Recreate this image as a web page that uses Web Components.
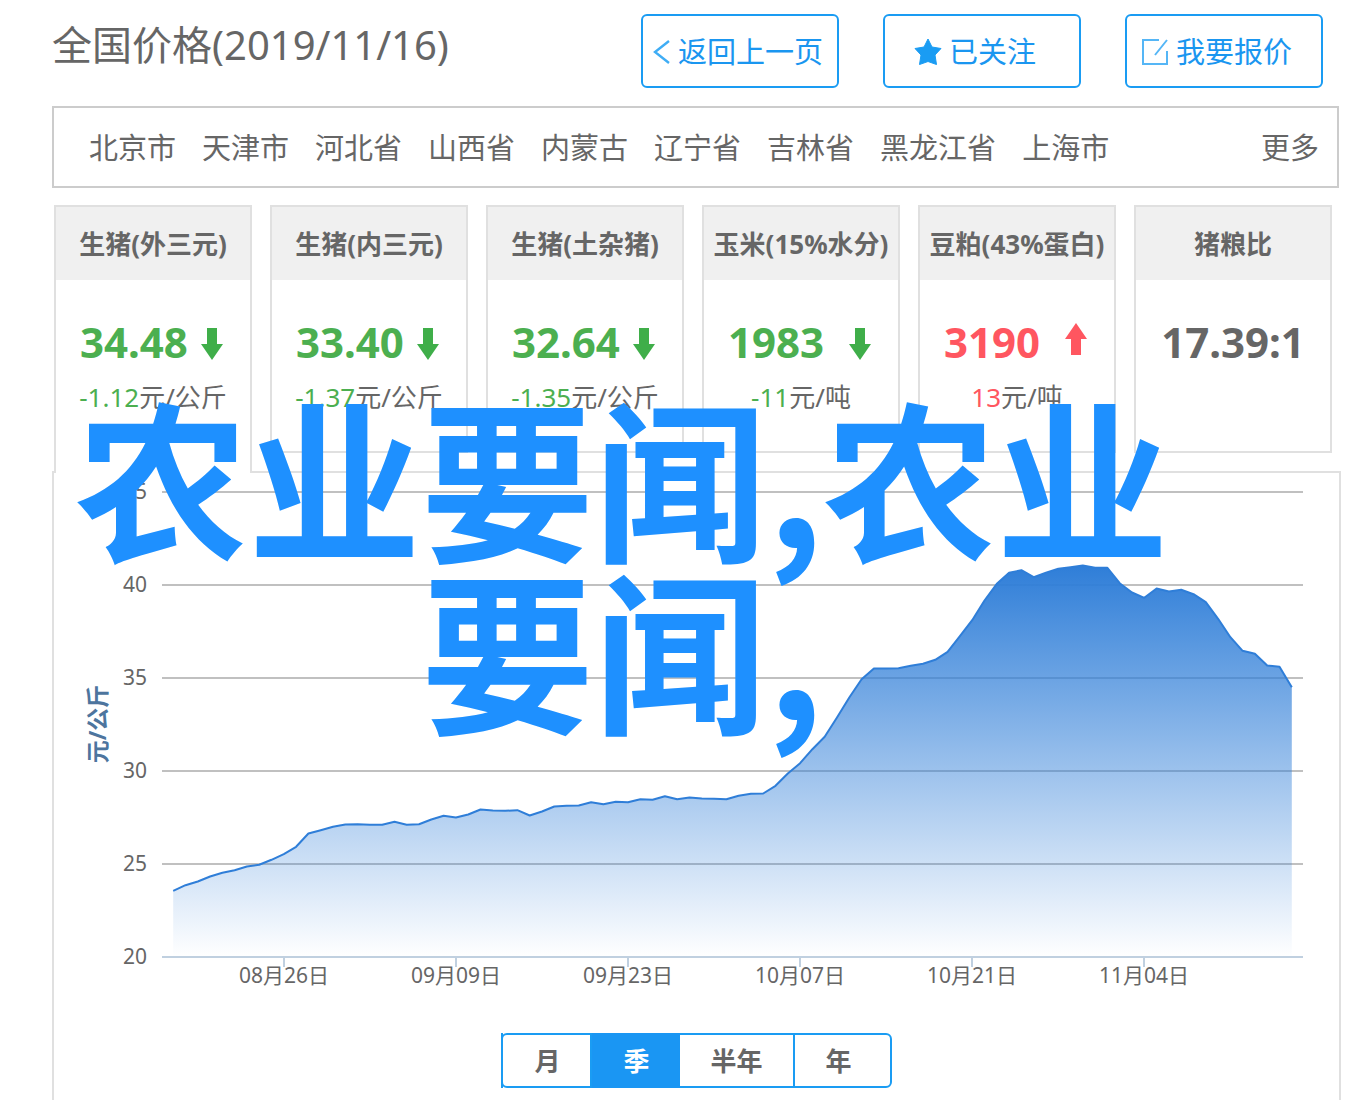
<!DOCTYPE html>
<html lang="zh-CN">
<head>
<meta charset="utf-8">
<title>全国价格</title>
<style>
body{margin:0;background:#fff;color:#666;font-family:"Noto Sans","Noto Sans CJK SC",sans-serif;}
</style>
</head>
<body>
<price-page></price-page>
<script>
const define = (name, html, init) => {
  const t = document.createElement('template');
  t.innerHTML = html;
  customElements.define(name, class extends HTMLElement {
    connectedCallback() {
      if (this.shadowRoot) return;
      this.attachShadow({mode: 'open'}).append(t.content.cloneNode(true));
      if (init) init.call(this, this.shadowRoot);
    }
  });
};

define('action-button', `
<style>
:host{display:block;width:198px}
button{box-sizing:border-box;width:100%;height:74px;display:flex;align-items:center;gap:7px;padding:2px 0 0 var(--inset,10px);
  border:2px solid #1a9cf3;border-radius:6px;background:#fff;color:#1a96f0;font:inherit;font-size:29px;line-height:40px;white-space:nowrap;cursor:pointer}
</style>
<button type="button"><slot name="icon"></slot><span><slot></slot></span></button>`);

define('region-nav', `
<style>
:host{display:block}
nav{box-sizing:border-box;height:82px;border:2px solid #ccc;display:flex;align-items:center;gap:26px;padding:2px 18px 0 35px;font-size:29px;line-height:40px;white-space:nowrap}
a{color:inherit;text-decoration:none}
.more{margin-left:auto}
</style>
<nav aria-label="地区"></nav>`, function (root) {
  const nav = root.querySelector('nav');
  for (const name of this.getAttribute('regions').split(' ')) {
    const a = document.createElement('a');
    a.href = '#'; a.textContent = name; nav.append(a);
  }
  const more = document.createElement('a');
  more.href = '#'; more.className = 'more'; more.textContent = '更多';
  nav.append(more);
});

define('price-card', `
<style>
:host{display:block;box-sizing:border-box;height:248px;border:2px solid #e0e0e0;background:#fff}
:host([active]){height:268px;border-bottom:0}
h2{margin:0;height:73px;background:#f0f0f0;font-size:26px;line-height:74px;font-weight:bold;text-align:center;white-space:nowrap}
.price{display:flex;justify-content:space-between;align-items:center;margin-top:36px;padding:0 27px 0 24px;font-size:42px;line-height:52px;font-weight:bold}
:host(:not([trend])) .price{justify-content:center;padding:0}
.change{margin:11px 0 0;font-size:26px;line-height:36px;text-align:center;white-space:nowrap}
:host([trend=down]) :is(.price,b){color:#4caf50}
:host([trend=up]) :is(.price,b){color:#ff5660}
b{font-weight:normal}
svg{display:none;width:22px;height:34px}
:host([trend=down]) svg{display:block;fill:#3fae49;margin-top:4px}
:host([trend=up]) svg{display:block;fill:#ff5660;transform:rotate(180deg);margin-bottom:6px}
</style>
<h2></h2>
<div class="price"><span class="v"></span><svg viewBox="0 0 22 34" aria-hidden="true"><path d="M6 1h10v16h6L11 33 0 17h6z"/></svg></div>
<p class="change"><b></b><span class="unit"></span></p>`, function (root) {
  root.querySelector('h2').textContent = this.getAttribute('label');
  root.querySelector('.v').textContent = this.getAttribute('value');
  root.querySelector('b').textContent = this.getAttribute('change') || '';
  root.querySelector('.unit').textContent = this.getAttribute('unit') || '';
});

/* Daily levels, in units above the 20 line; 93 units are 5 元. */
const LEVELS = [66.2,71.8,75.5,80.5,84.2,86.8,90.5,92.2,97.2,102.8,110.2,123.5,126.8,130.2,132.5,132.8,132.2,132.2,135.2,132.2,132.8,137.5,141.2,139.5,142.5,147.5,146.5,146.2,146.8,141.5,145.5,150.5,151.2,151.5,154.8,152.8,155.2,154.8,157.8,157.2,160.8,157.8,159.5,158.5,158.2,157.8,161.2,163.2,163.5,171.2,183.5,193.8,207.8,220.2,239.5,259.5,277.8,288.5,288.5,288.8,291.2,293.2,297.2,305.2,320.8,336.8,356.5,373.2,384.2,386.8,379.8,384.2,388.2,389.8,391.5,389.2,389.2,373.8,364.5,359.2,368.5,365.5,367.2,362.8,354.8,338.2,319.8,306.2,303.2,291.5,290.2,269.8];
const DATES = [[9,'08月26日'],[23,'09月09日'],[37,'09月23日'],[51,'10月07日'],[65,'10月21日'],[79,'11月04日']];

define('trend-chart', `
<style>
:host{display:block}
svg{display:block;width:100%;height:540px}
text{font-size:21px;fill:#666}
.title{font-size:23px;font-weight:bold;fill:#4d759e}
</style>
<svg role="img" aria-label="价格走势"></svg>`, function (root) {
  const svg = root.querySelector('svg');
  const draw = () => {
    const left = 108, right = svg.clientWidth - 36, base = 484, pad = (right - left) / 102;
    const x = i => left + pad + i * (right - left - 2 * pad) / (LEVELS.length - 1);
    let out = '<defs><linearGradient id="fade" x1="0" y1="0" x2="0" y2="1"><stop offset="0" stop-color="#2f7ed8"/><stop offset="1" stop-color="#2f7ed8" stop-opacity="0"/></linearGradient></defs>';
    for (let k = 0; k < 6; k++) {
      const y = base - k * 93;
      if (k) out += `<path d="M${left} ${y}H${right}" stroke="#c0c0c0" stroke-width="2"/>`;
      out += `<text x="${left - 15}" y="${y + 7}" text-anchor="end">${20 + k * 5}</text>`;
    }
    const line = LEVELS.map((v, i) => `${i ? 'L' : 'M'}${x(i).toFixed(1)} ${(base - v).toFixed(1)}`).join('');
    out += `<path d="${line}V${base}H${x(0).toFixed(1)}Z" fill="url(#fade)"/><path d="${line}" fill="none" stroke="#2f7ed8" stroke-width="2" stroke-linejoin="round"/>`;
    out += `<path d="M${left} ${base}H${right}" stroke="#c0d0e0" stroke-width="2"/>`;
    for (const [i, d] of DATES) {
      out += `<path d="M${Math.round(x(i))} ${base}v10" stroke="#c0d0e0" stroke-width="2"/><text x="${Math.round(x(i))}" y="${base + 26}" text-anchor="middle">${d}</text>`;
    }
    out += `<text class="title" transform="translate(52 251) rotate(-90)" text-anchor="middle">元/公斤</text>`;
    svg.innerHTML = out;
  };
  draw();
  new ResizeObserver(draw).observe(svg);
});

define('period-switch', `
<style>
:host{display:flex;justify-content:center}
div{display:flex;height:51px;border:2px solid #1a9cf3;border-radius:6px}
button{margin:-2px 0;padding:0 30px 0 31px;border:0;border-left:2px solid #1a9cf3;background:none;color:#666;font:inherit;font-size:26px;line-height:36px;font-weight:bold;cursor:pointer}
button:first-child{margin-left:-2px}
button:last-child{padding-right:38px}
button[aria-pressed=true]{background:#1a96f3;color:#fff}
button[aria-pressed=true]+button{border-left:0}
</style>
<div role="group" aria-label="周期"><button type="button">月</button><button type="button" aria-pressed="true">季</button><button type="button">半年</button><button type="button">年</button></div>`);

define('headline-overlay', `
<style>
:host{display:block;position:absolute;left:0;top:388px;width:1244px;pointer-events:none;z-index:5;
  font-family:"Noto Sans CJK SC",sans-serif;font-size:173px;line-height:172px;font-weight:bold;color:#1e90ff;text-align:center}
</style>
<slot></slot>`);

define('price-page', `
<style>
:host{display:flex;flex-direction:column;box-sizing:border-box;min-height:100vh;padding:14px 19px 0 52px;position:relative}
header{display:flex;align-items:flex-start;gap:44px;padding-right:18px;margin-bottom:18px}
h1{margin:0 auto 0 0;font-size:40px;line-height:62px;font-weight:normal;white-space:nowrap}
region-nav{margin-right:2px}
.cards{display:grid;grid-template-columns:repeat(6,1fr);gap:18px;align-items:start;margin:17px 9px 0 2px;position:relative;z-index:1}
.panel{flex:1;border:2px solid #e0e0e0;border-bottom:0;margin-top:-2px}
period-switch{margin:20px 0 12px}
</style>
<header>
<h1>全国价格(2019/11/16)</h1>
<action-button><svg slot="icon" width="18" height="26" viewBox="0 0 18 26" fill="none" stroke="#3fadf5" stroke-width="2.4"><path d="M16 2 2 13l14 11"/></svg>返回上一页</action-button>
<action-button style="--inset:29px"><svg slot="icon" width="28" height="30" viewBox="0 0 28 30" fill="#1a9cf3"><path d="M14 2l4 8 9 1.500-6 6.500 1.500 9.500L14 24.500 5.500 27.500 7 18 1 11.500 10 10z" stroke="#1a9cf3" stroke-linejoin="round"/></svg>已关注</action-button>
<action-button style="--inset:14px"><svg slot="icon" width="28" height="28" viewBox="0 0 28 28" fill="none" stroke="#55b6f6" stroke-width="2"><path d="M18 2H2v24h24V13M14 17 26 2"/></svg>我要报价</action-button>
</header>
<region-nav regions="北京市 天津市 河北省 山西省 内蒙古 辽宁省 吉林省 黑龙江省 上海市"></region-nav>
<section class="cards">
<price-card active trend="down" label="生猪(外三元)" value="34.48" change="-1.12" unit="元/公斤"></price-card>
<price-card trend="down" label="生猪(内三元)" value="33.40" change="-1.37" unit="元/公斤"></price-card>
<price-card trend="down" label="生猪(土杂猪)" value="32.64" change="-1.35" unit="元/公斤"></price-card>
<price-card trend="down" label="玉米(15%水分)" value="1983" change="-11" unit="元/吨"></price-card>
<price-card trend="up" label="豆粕(43%蛋白)" value="3190" change="13" unit="元/吨"></price-card>
<price-card label="猪粮比" value="17.39:1"></price-card>
</section>
<section class="panel">
<trend-chart></trend-chart>
<period-switch></period-switch>
</section>
<headline-overlay>农业要闻,农业<br>要闻,</headline-overlay>`);
</script>
</body>
</html>
